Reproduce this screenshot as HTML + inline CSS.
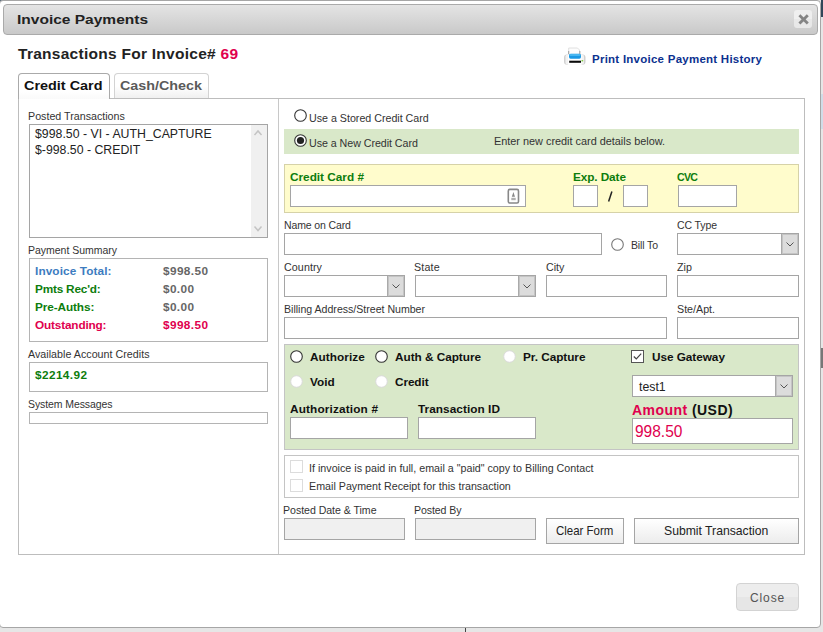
<!DOCTYPE html>
<html><head><meta charset="utf-8"><style>
html,body{margin:0;padding:0;}
body{width:823px;height:632px;overflow:hidden;position:relative;background:#e6e6e6;font-family:"Liberation Sans",sans-serif;}
.a{position:absolute;box-sizing:border-box;}
.t{position:absolute;white-space:nowrap;line-height:1;}
svg.a{overflow:visible;}
</style></head><body>
<div class="a" style="left:0px;top:0px;width:4px;height:4px;background:#5a6b7a;"></div>
<div class="a" style="left:821px;top:0px;width:2px;height:17px;background:#2f4659;"></div>
<div class="a" style="left:821px;top:17px;width:2px;height:3px;background:#dfe3e6;"></div>
<div class="a" style="left:821px;top:348px;width:2px;height:20px;background:#777;"></div>
<div class="a" style="left:821px;top:94px;width:2px;height:35px;background:#d0dce7;"></div>
<div class="a" style="left:465px;top:628px;width:1px;height:4px;background:#444;"></div>
<div class="a" style="left:-1px;top:0;width:822px;height:628px;border:1px solid #a6a6a6;border-radius:4px;background:#fff;"></div>
<div class="a" style="left:3px;top:4px;width:815px;height:31px;border:1px solid #aaa;border-radius:4px;background:linear-gradient(#e4e4e4,#c9c9c9);"></div>
<div class="t" style="left:17px;top:13px;font-size:13px;font-weight:bold;color:#222;transform:scaleX(1.193);transform-origin:0 0;">Invoice Payments</div>
<div class="a" style="left:794px;top:10px;width:18px;height:18px;border-radius:3px;background:linear-gradient(#efefef 50%,#e8e8e8 50%);"></div>
<svg class="a" style="left:797px;top:13px" width="13" height="13"><path d="M3.4 3.2 L9.8 9.6 M9.8 3.2 L3.4 9.6" stroke="#858585" stroke-width="2.8" stroke-linecap="square"/></svg>
<div class="t" style="left:18px;top:46px;font-size:15.5px;font-weight:bold;color:#222;letter-spacing:0.27px">Transactions For Invoice# <span style="color:#e0004e">69</span></div>
<svg class="a" style="left:558px;top:44px" width="34" height="24">
<path d="M10.7 4 H19.5 L21.5 6 V11 H10.7 Z" fill="#fdfdfd" stroke="#d8d8d8" stroke-width="0.8"/>
<rect x="10" y="7" width="1.2" height="4" fill="#aaa"/><rect x="21.2" y="7" width="1.2" height="4" fill="#aaa"/>
<rect x="6" y="10.5" width="21.5" height="10.3" rx="3" fill="#d0d0d0"/>
<rect x="7.5" y="10.5" width="18.5" height="10.3" rx="2" fill="#f2f2f2"/>
<rect x="10" y="10.5" width="13.5" height="10.3" fill="#fff"/>
<rect x="11" y="9.7" width="12" height="5" rx="1.6" fill="#1a98e4"/>
<rect x="11.5" y="10" width="11" height="2" rx="1" fill="#48b6f0"/>
<rect x="11.2" y="16.7" width="11.8" height="2.1" fill="#0a0a0a"/>
<rect x="23.5" y="16.1" width="1.7" height="1.3" fill="#7c3"/>
</svg>
<div class="t" style="left:592px;top:54px;font-size:11.5px;font-weight:bold;color:#0c318f;letter-spacing:0.25px;">Print Invoice Payment History</div>
<div class="a" style="left:18px;top:98px;width:787px;height:457px;border:1px solid #bdbdbd;background:#fff;"></div>
<div class="a" style="left:18px;top:73px;width:92px;height:26px;border:1px solid #aaa;border-bottom:none;border-radius:4px 4px 0 0;background:linear-gradient(#fff 70%,#fafafa);"></div>
<div class="t" style="left:24px;top:80px;font-size:12.5px;font-weight:bold;color:#111;transform:scaleX(1.153);transform-origin:0 0;">Credit Card</div>
<div class="a" style="left:114px;top:73px;width:95px;height:25px;border:1px solid #d3d3d3;border-bottom:none;border-radius:4px 4px 0 0;background:linear-gradient(#fff 50%,#f0f0f0);"></div>
<div class="t" style="left:120px;top:80px;font-size:12.5px;font-weight:bold;color:#5a5a5a;transform:scaleX(1.146);transform-origin:0 0;">Cash/Check</div>
<div class="a" style="left:278px;top:99px;width:1px;height:455px;background:#c8c8c8;"></div>
<div class="t" style="left:28px;top:111px;font-size:10.7px;color:#333;letter-spacing:0.00px;">Posted Transactions</div>
<div class="a" style="left:29px;top:124px;width:239px;height:114px;border:1px solid #a5a5a5;background:#fff;"></div>
<div class="a" style="left:251px;top:125px;width:16px;height:112px;background:#f0f0f0;"></div>
<svg class="a" style="left:252px;top:129px" width="12" height="8"><path d="M2.5 6 L6 2 L9.5 6" fill="none" stroke="#c4c4c4" stroke-width="1.5"/></svg>
<svg class="a" style="left:252px;top:225px" width="12" height="8"><path d="M2.5 1.5 L6 5.5 L9.5 1.5" fill="none" stroke="#c4c4c4" stroke-width="1.5"/></svg>
<div class="t" style="left:35px;top:128px;font-size:12.3px;color:#222;letter-spacing:0.01px;">$998.50 - VI - AUTH_CAPTURE</div>
<div class="t" style="left:35px;top:144px;font-size:12.3px;color:#222;">$-998.50 - CREDIT</div>
<div class="t" style="left:28px;top:245px;font-size:10.5px;color:#333;letter-spacing:-0.02px;">Payment Summary</div>
<div class="a" style="left:29px;top:258px;width:239px;height:84px;border:1px solid #b4b4b4;background:#fff;"></div>
<div class="t" style="left:35px;top:266px;font-size:11.8px;font-weight:bold;color:#3d7cc0;letter-spacing:0.10px;">Invoice Total:</div>
<div class="t" style="left:35px;top:284px;font-size:11.8px;font-weight:bold;color:#0d7d0d;letter-spacing:-0.20px;">Pmts Rec'd:</div>
<div class="t" style="left:35px;top:302px;font-size:11.8px;font-weight:bold;color:#0d7d0d;letter-spacing:-0.11px;">Pre-Auths:</div>
<div class="t" style="left:35px;top:320px;font-size:11.8px;font-weight:bold;color:#e0004e;letter-spacing:-0.17px;">Outstanding:</div>
<div class="t" style="left:163px;top:266px;font-size:11.8px;font-weight:bold;color:#666;letter-spacing:0.39px;">$998.50</div>
<div class="t" style="left:163px;top:284px;font-size:11.8px;font-weight:bold;color:#666;letter-spacing:0.37px;">$0.00</div>
<div class="t" style="left:163px;top:302px;font-size:11.8px;font-weight:bold;color:#666;letter-spacing:0.37px;">$0.00</div>
<div class="t" style="left:163px;top:320px;font-size:11.8px;font-weight:bold;color:#e0004e;letter-spacing:0.39px;">$998.50</div>
<div class="t" style="left:28px;top:349px;font-size:10.7px;color:#333;letter-spacing:0.02px;">Available Account Credits</div>
<div class="a" style="left:29px;top:362px;width:239px;height:30px;border:1px solid #b4b4b4;background:#fff;"></div>
<div class="t" style="left:35px;top:370px;font-size:11.8px;font-weight:bold;color:#0d7d0d;letter-spacing:0.40px;">$2214.92</div>
<div class="t" style="left:28px;top:399px;font-size:10.5px;color:#333;letter-spacing:-0.09px;">System Messages</div>
<div class="a" style="left:29px;top:412px;width:239px;height:12px;border:1px solid #b4b4b4;background:#fff;"></div>
<svg class="a" style="left:294px;top:109px" width="13" height="13"><circle cx="6.5" cy="6.5" r="5.8" fill="#fff" stroke="#333" stroke-width="1.1"/></svg>
<div class="t" style="left:309px;top:113px;font-size:10.7px;color:#333;letter-spacing:-0.01px;">Use a Stored Credit Card</div>
<div class="a" style="left:284px;top:129px;width:515px;height:25px;background:#d9e8c9;"></div>
<svg class="a" style="left:294px;top:134px" width="13" height="13"><circle cx="6.5" cy="6.5" r="5.8" fill="#fff" stroke="#333" stroke-width="1.1"/><circle cx="6.5" cy="6.5" r="3.6" fill="#222"/></svg>
<div class="t" style="left:309px;top:138px;font-size:10.7px;color:#333;letter-spacing:-0.05px;">Use a New Credit Card</div>
<div class="t" style="left:494px;top:136px;font-size:10.9px;color:#333;letter-spacing:-0.01px;">Enter new credit card details below.</div>
<div class="a" style="left:284px;top:164px;width:515px;height:49px;border:1px solid #d6d2a8;background:#fffccc;"></div>
<div class="t" style="left:290px;top:172px;font-size:11.8px;font-weight:bold;color:#0d7d0d;letter-spacing:-0.01px;">Credit Card #</div>
<div class="a" style="left:290px;top:185px;width:236px;height:22px;border:1px solid #a5a5a5;background:#fff;"></div>
<svg class="a" style="left:506px;top:188px" width="14" height="16"><rect x="2.3" y="1.4" width="10.2" height="13.6" rx="1.5" fill="#fff" stroke="#888" stroke-width="1.6"/><path d="M7.4 4 L9 8.8 H5.8 Z" fill="#888"/><rect x="5.3" y="9.8" width="4.4" height="2.4" fill="#b0b0b0"/></svg>
<div class="t" style="left:573px;top:172px;font-size:11.8px;font-weight:bold;color:#0d7d0d;letter-spacing:-0.10px;">Exp. Date</div>
<div class="a" style="left:573px;top:185px;width:25px;height:22px;border:1px solid #a5a5a5;background:#fff;"></div>
<svg class="a" style="left:604px;top:188px" width="12" height="18"><path d="M7.9 3.5 L4.6 13.6" stroke="#222" stroke-width="1.5"/></svg>
<div class="a" style="left:623px;top:185px;width:25px;height:22px;border:1px solid #a5a5a5;background:#fff;"></div>
<div class="t" style="left:677px;top:172px;font-size:10.6px;font-weight:bold;color:#0d7d0d;letter-spacing:-0.69px;">CVC</div>
<div class="a" style="left:678px;top:185px;width:59px;height:22px;border:1px solid #a5a5a5;background:#fff;"></div>
<div class="t" style="left:284px;top:220px;font-size:10.5px;color:#333;letter-spacing:-0.12px;">Name on Card</div>
<div class="a" style="left:284px;top:233px;width:318px;height:22px;border:1px solid #a5a5a5;background:#fff;"></div>
<svg class="a" style="left:611px;top:238px" width="13" height="13"><circle cx="6.5" cy="6.5" r="5.8" fill="#fff" stroke="#777" stroke-width="1.1"/></svg>
<div class="t" style="left:631px;top:240px;font-size:10.5px;color:#333;letter-spacing:-0.14px;">Bill To</div>
<div class="t" style="left:677px;top:220px;font-size:10.5px;color:#333;letter-spacing:-0.11px;">CC Type</div>
<div class="a" style="left:677px;top:233px;width:122px;height:22px;border:1px solid #a5a5a5;background:#fff;"></div>
<div class="a" style="left:781px;top:234px;width:17px;height:20px;border-left:1px solid #aaa;background:#dcdcdc;box-shadow:inset 0 0 0 1px #c4c4c4;"></div>
<svg class="a" style="left:784.5px;top:239.5px" width="10" height="8"><path d="M1.5 2.5 L5 6 L8.5 2.5" fill="none" stroke="#555" stroke-width="1"/></svg>
<div class="t" style="left:284px;top:262px;font-size:10.7px;color:#333;letter-spacing:0.09px;">Country</div>
<div class="t" style="left:414px;top:262px;font-size:10.7px;color:#333;letter-spacing:0.18px;">State</div>
<div class="t" style="left:546px;top:262px;font-size:10.7px;color:#333;">City</div>
<div class="t" style="left:677px;top:262px;font-size:10.7px;color:#333;">Zip</div>
<div class="a" style="left:284px;top:275px;width:121px;height:22px;border:1px solid #a5a5a5;background:#fff;"></div>
<div class="a" style="left:387px;top:276px;width:17px;height:20px;border-left:1px solid #aaa;background:#dcdcdc;box-shadow:inset 0 0 0 1px #c4c4c4;"></div>
<svg class="a" style="left:390.5px;top:281.5px" width="10" height="8"><path d="M1.5 2.5 L5 6 L8.5 2.5" fill="none" stroke="#555" stroke-width="1"/></svg>
<div class="a" style="left:415px;top:275px;width:121px;height:22px;border:1px solid #a5a5a5;background:#fff;"></div>
<div class="a" style="left:518px;top:276px;width:17px;height:20px;border-left:1px solid #aaa;background:#dcdcdc;box-shadow:inset 0 0 0 1px #c4c4c4;"></div>
<svg class="a" style="left:521.5px;top:281.5px" width="10" height="8"><path d="M1.5 2.5 L5 6 L8.5 2.5" fill="none" stroke="#555" stroke-width="1"/></svg>
<div class="a" style="left:546px;top:275px;width:121px;height:22px;border:1px solid #a5a5a5;background:#fff;"></div>
<div class="a" style="left:677px;top:275px;width:122px;height:22px;border:1px solid #a5a5a5;background:#fff;"></div>
<div class="t" style="left:284px;top:304px;font-size:10.6px;color:#333;letter-spacing:-0.01px;">Billing Address/Street Number</div>
<div class="t" style="left:677px;top:304px;font-size:10.7px;color:#333;">Ste/Apt.</div>
<div class="a" style="left:284px;top:317px;width:383px;height:22px;border:1px solid #a5a5a5;background:#fff;"></div>
<div class="a" style="left:677px;top:317px;width:122px;height:22px;border:1px solid #a5a5a5;background:#fff;"></div>
<div class="a" style="left:284px;top:344px;width:515px;height:106px;border:1px solid #c4c4c4;background:#d9e8c9;"></div>
<svg class="a" style="left:290px;top:350px" width="13" height="13"><circle cx="6.5" cy="6.5" r="5.8" fill="#fff" stroke="#333" stroke-width="1.1"/></svg>
<div class="t" style="left:310px;top:352px;font-size:11.8px;font-weight:bold;color:#111;letter-spacing:0.04px;">Authorize</div>
<svg class="a" style="left:375px;top:350px" width="13" height="13"><circle cx="6.5" cy="6.5" r="5.8" fill="#fff" stroke="#333" stroke-width="1.1"/></svg>
<div class="t" style="left:395px;top:352px;font-size:11.8px;font-weight:bold;color:#111;letter-spacing:-0.04px;">Auth &amp; Capture</div>
<svg class="a" style="left:503px;top:350px" width="13" height="13"><circle cx="6.5" cy="6.5" r="5.8" fill="#fff" stroke="#dadada" stroke-width="1"/></svg>
<div class="t" style="left:523px;top:352px;font-size:11.8px;font-weight:bold;color:#111;letter-spacing:-0.05px;">Pr. Capture</div>
<svg class="a" style="left:631px;top:350px" width="13" height="13"><rect x="0.5" y="0.5" width="12" height="12" fill="#fff" stroke="#555" stroke-width="1"/><path d="M2.8 6.5 L5.3 9 L10.2 3.6" fill="none" stroke="#444" stroke-width="1.2"/></svg>
<div class="t" style="left:652px;top:352px;font-size:11.8px;font-weight:bold;color:#111;letter-spacing:-0.05px;">Use Gateway</div>
<svg class="a" style="left:290px;top:375px" width="13" height="13"><circle cx="6.5" cy="6.5" r="5.8" fill="#fff" stroke="#dadada" stroke-width="1"/></svg>
<div class="t" style="left:310px;top:377px;font-size:11.8px;font-weight:bold;color:#111;">Void</div>
<svg class="a" style="left:375px;top:375px" width="13" height="13"><circle cx="6.5" cy="6.5" r="5.8" fill="#fff" stroke="#dadada" stroke-width="1"/></svg>
<div class="t" style="left:395px;top:377px;font-size:11.8px;font-weight:bold;color:#111;letter-spacing:-0.10px;">Credit</div>
<div class="a" style="left:632px;top:375px;width:161px;height:22px;border:1px solid #a5a5a5;background:#fff;"></div>
<div class="a" style="left:775px;top:376px;width:17px;height:20px;border-left:1px solid #aaa;background:#dcdcdc;box-shadow:inset 0 0 0 1px #c4c4c4;"></div>
<svg class="a" style="left:778.5px;top:381.5px" width="10" height="8"><path d="M1.5 2.5 L5 6 L8.5 2.5" fill="none" stroke="#555" stroke-width="1"/></svg>
<div class="t" style="left:639px;top:381px;font-size:12.3px;color:#222;">test1</div>
<div class="t" style="left:290px;top:404px;font-size:11.8px;font-weight:bold;color:#111;letter-spacing:0.15px;">Authorization #</div>
<div class="t" style="left:418px;top:404px;font-size:11.8px;font-weight:bold;color:#111;letter-spacing:0.05px;">Transaction ID</div>
<div class="a" style="left:290px;top:417px;width:118px;height:22px;border:1px solid #a5a5a5;background:#fff;"></div>
<div class="a" style="left:418px;top:417px;width:118px;height:22px;border:1px solid #a5a5a5;background:#fff;"></div>
<div class="t" style="left:632px;top:403px;font-size:14px;font-weight:bold;color:#111;letter-spacing:0.45px"><span style="color:#e0004e">Amount</span> (USD)</div>
<div class="a" style="left:632px;top:418px;width:161px;height:26px;border:1px solid #a5a5a5;background:#fff;"></div>
<div class="t" style="left:635px;top:423px;font-size:16.5px;color:#e0004e;transform:scaleX(0.939);transform-origin:0 0;">998.50</div>
<div class="a" style="left:284px;top:455px;width:515px;height:43px;border:1px solid #c4c4c4;background:#fff;"></div>
<div class="a" style="left:290px;top:460px;width:13px;height:13px;border:1px solid #dcdcdc;background:#fff;"></div>
<div class="a" style="left:290px;top:479px;width:13px;height:13px;border:1px solid #dcdcdc;background:#fff;"></div>
<div class="t" style="left:309px;top:463px;font-size:10.7px;color:#333;letter-spacing:0.01px;">If invoice is paid in full, email a &quot;paid&quot; copy to Billing Contact</div>
<div class="t" style="left:309px;top:481px;font-size:10.7px;color:#333;letter-spacing:0.01px;">Email Payment Receipt for this transaction</div>
<div class="t" style="left:283px;top:505px;font-size:10.6px;color:#333;letter-spacing:-0.04px;">Posted Date &amp; Time</div>
<div class="t" style="left:414px;top:505px;font-size:10.6px;color:#333;letter-spacing:-0.10px;">Posted By</div>
<div class="a" style="left:284px;top:518px;width:121px;height:22px;border:1px solid #a5a5a5;background:#f0f0f0;"></div>
<div class="a" style="left:415px;top:518px;width:121px;height:22px;border:1px solid #a5a5a5;background:#f0f0f0;"></div>
<div class="a" style="left:546px;top:518px;width:78px;height:26px;border:1px solid #a5a5a5;background:linear-gradient(#fff,#ececec);"></div>
<div class="t" style="left:556px;top:524px;font-size:13px;color:#222;transform:scaleX(0.882);transform-origin:0 0;">Clear Form</div>
<div class="a" style="left:634px;top:518px;width:165px;height:26px;border:1px solid #a5a5a5;background:linear-gradient(#fff,#ececec);"></div>
<div class="t" style="left:664px;top:524px;font-size:13px;color:#222;transform:scaleX(0.938);transform-origin:0 0;">Submit Transaction</div>
<div class="a" style="left:736px;top:583px;width:63px;height:28px;border:1px solid #d3d3d3;border-radius:4px;background:linear-gradient(#ededed 50%,#e6e6e6 50%);"></div>
<div class="t" style="left:750px;top:592px;font-size:12px;color:#555;letter-spacing:0.88px;">Close</div>
</body></html>
